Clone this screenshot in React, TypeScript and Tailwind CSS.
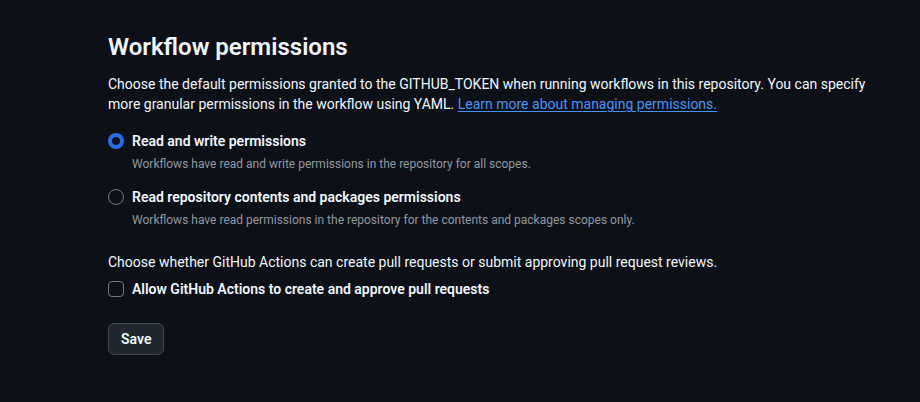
export default function App() {
  return (
    <div className="min-h-screen w-full bg-[#0d1117] font-[family-name:Roboto,'Noto_Sans',sans-serif] text-[#f0f6fc]">
      <div className="pl-[108px] pr-[40px] pt-[31px]">
        <h2 className="text-[24px] font-semibold leading-[32px] text-[#f0f6fc]">Workflow permissions</h2>
        <p className="mt-[11px] text-[14px] leading-[20px] text-[#f0f6fc]">
          Choose the default permissions granted to the GITHUB_TOKEN when running workflows in this repository. You can
          specify more granular permissions in the workflow using YAML.{" "}
          <a href="#" className="text-[#4493f8] underline underline-offset-2">
            Learn more about managing permissions.
          </a>
        </p>

        <div className="mt-[16px] flex flex-col gap-[12px]">
          <label className="flex items-start gap-[8px]">
            <span className="mt-[3px] h-[16px] w-[16px] shrink-0 rounded-full border-[4px] border-[#1f6feb] bg-[#0d1117]" />
            <span className="flex flex-col">
              <span className="text-[14px] font-semibold leading-[22px]">Read and write permissions</span>
              <span className="mt-[2px] text-[12px] leading-[20px] text-[#9198a1]">
                Workflows have read and write permissions in the repository for all scopes.
              </span>
            </span>
          </label>
          <label className="flex items-start gap-[8px]">
            <span className="mt-[3px] h-[16px] w-[16px] shrink-0 rounded-full border border-[#6e7681] bg-[#0d1117]" />
            <span className="flex flex-col">
              <span className="text-[14px] font-semibold leading-[22px]">
                Read repository contents and packages permissions
              </span>
              <span className="mt-[2px] text-[12px] leading-[20px] text-[#9198a1]">
                Workflows have read permissions in the repository for the contents and packages scopes only.
              </span>
            </span>
          </label>
        </div>

        <p className="mt-[22px] text-[14px] leading-[20px]">
          Choose whether GitHub Actions can create pull requests or submit approving pull request reviews.
        </p>
        <label className="mt-[6px] flex items-center gap-[8px]">
          <span className="h-[16px] w-[16px] shrink-0 rounded-[4px] border border-[#6e7681] bg-[#0d1117]" />
          <span className="text-[14px] font-semibold leading-[22px]">
            Allow GitHub Actions to create and approve pull requests
          </span>
        </label>

        <button className="mt-[23px] h-[32px] rounded-[6px] border border-[#3d444d] bg-[#212830] px-[12px] text-[14px] font-semibold leading-[20px] text-[#f0f6fc]">
          Save
        </button>
      </div>
    </div>
  )
}
